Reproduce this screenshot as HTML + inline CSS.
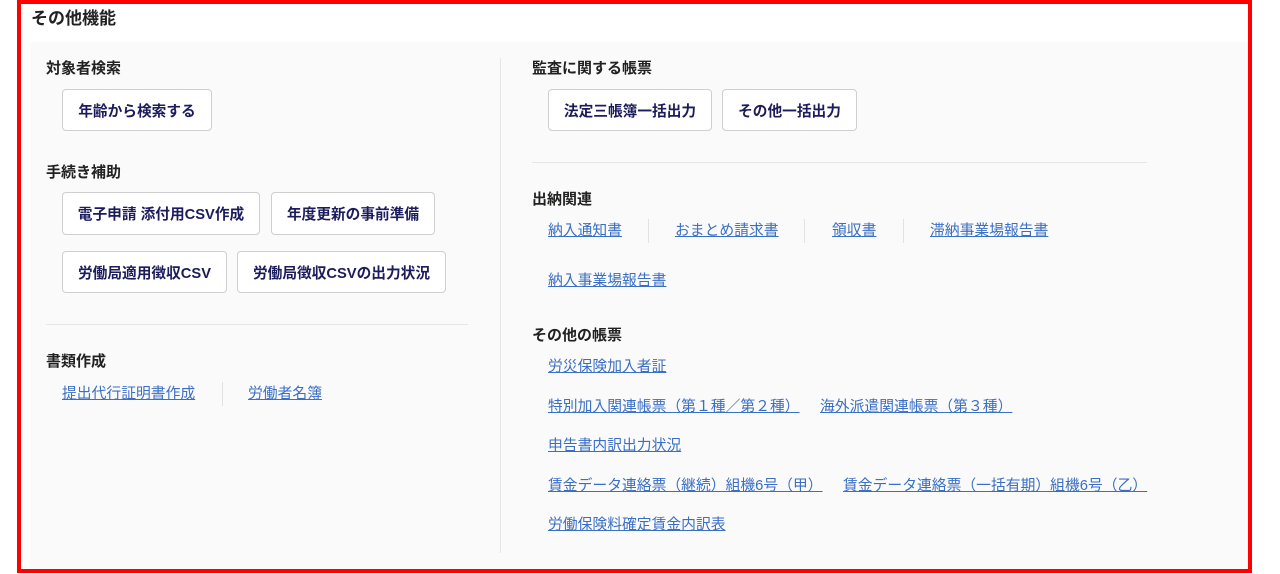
<!DOCTYPE html>
<html><head><meta charset="utf-8"><style>
body{margin:0;width:1280px;height:574px;background:#fff;position:relative;overflow:hidden;font-family:"Liberation Sans","Noto Sans CJK JP",sans-serif;}
.a{position:absolute;white-space:nowrap;}
.frame{left:17px;top:0;width:1227px;height:565px;border:4px solid #ff0000;}
.panel{left:30px;top:42px;width:1218px;height:527px;background:#fafafa;}
.title{left:31px;top:9px;font-size:17px;font-weight:bold;color:#222;line-height:20px;}
.h{font-size:15px;font-weight:bold;color:#222;line-height:20px;}
.btn{border:1px solid #cfcfcf;border-radius:4px;background:#fff;font-size:14.7px;font-weight:bold;color:#1c1c5c;display:flex;align-items:center;justify-content:center;box-sizing:border-box;}
.l{font-size:14.8px;color:#3a6fc4;text-decoration:underline;line-height:20px;}
.sep{width:1px;height:24px;background:#e2e2e2;}
.hr{height:1px;background:#e6e6e6;}
</style></head><body>
<div class="a frame"></div>
<div class="a panel"></div>
<div class="a title">その他機能</div>
<div class="a" style="left:500px;top:58px;width:1px;height:495px;background:#e6e6e6"></div>

<div class="a h" style="left:46px;top:59px">対象者検索</div>
<div class="a btn" style="left:62px;top:89px;width:150px;height:42px">年齢から検索する</div>
<div class="a h" style="left:46px;top:163px">手続き補助</div>
<div class="a btn" style="left:62px;top:192px;width:198px;height:43px">電子申請 添付用CSV作成</div>
<div class="a btn" style="left:271px;top:192px;width:164px;height:43px">年度更新の事前準備</div>
<div class="a btn" style="left:62px;top:251px;width:165px;height:42px">労働局適用徴収CSV</div>
<div class="a btn" style="left:237px;top:251px;width:209px;height:42px">労働局徴収CSVの出力状況</div>
<div class="a hr" style="left:46px;top:324px;width:422px"></div>
<div class="a h" style="left:46px;top:352px">書類作成</div>
<div class="a l" style="left:62px;top:384px">提出代行証明書作成</div>
<div class="a sep" style="left:222px;top:382px"></div>
<div class="a l" style="left:248px;top:384px">労働者名簿</div>

<div class="a h" style="left:532px;top:59px">監査に関する帳票</div>
<div class="a btn" style="left:548px;top:89px;width:164px;height:42px">法定三帳簿一括出力</div>
<div class="a btn" style="left:722px;top:89px;width:135px;height:42px">その他一括出力</div>
<div class="a hr" style="left:532px;top:162px;width:615px"></div>
<div class="a h" style="left:532px;top:190px">出納関連</div>
<div class="a l" style="left:548px;top:221px">納入通知書</div>
<div class="a sep" style="left:648px;top:219px"></div>
<div class="a l" style="left:675px;top:221px">おまとめ請求書</div>
<div class="a sep" style="left:804px;top:219px"></div>
<div class="a l" style="left:832px;top:221px">領収書</div>
<div class="a sep" style="left:903px;top:219px"></div>
<div class="a l" style="left:930px;top:221px">滞納事業場報告書</div>
<div class="a l" style="left:548px;top:271px">納入事業場報告書</div>
<div class="a h" style="left:532px;top:326px">その他の帳票</div>
<div class="a l" style="left:548px;top:357px">労災保険加入者証</div>
<div class="a l" style="left:548px;top:397px">特別加入関連帳票（第１種／第２種）</div>
<div class="a l" style="left:820px;top:397px">海外派遣関連帳票（第３種）</div>
<div class="a l" style="left:548px;top:436px">申告書内訳出力状況</div>
<div class="a l" style="left:548px;top:476px">賃金データ連絡票（継続）組機6号（甲）</div>
<div class="a l" style="left:843px;top:476px">賃金データ連絡票（一括有期）組機6号（乙）</div>
<div class="a l" style="left:548px;top:515px">労働保険料確定賃金内訳表</div>
</body></html>
